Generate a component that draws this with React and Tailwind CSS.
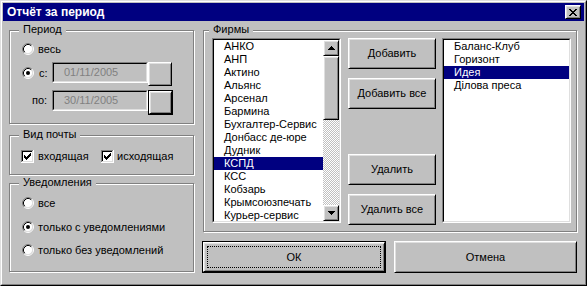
import React from "react";

const bevel =
  "border border-t-white border-l-white border-r-black border-b-black shadow-[inset_1px_1px_0_#dfdfdf,inset_-1px_-1px_0_#808080]";

const Sunken = ({ className = "", children, inner = "" }) => (
  <div className={`border border-t-[#808080] border-l-[#808080] border-r-white border-b-white ${className}`}>
    <div className={`w-full h-full border border-t-black border-l-black border-r-[#dfdfdf] border-b-[#dfdfdf] ${inner}`}>
      {children}
    </div>
  </div>
);

const Radio = ({ checked }) => (
  <svg width="12" height="12" viewBox="0 0 12 12" className="shrink-0">
    <circle cx="6" cy="6" r="4.5" fill="#fff" />
    <path d="M2.11 9.89 A5.5 5.5 0 0 1 9.89 2.11" stroke="#808080" fill="none" />
    <path d="M9.89 2.11 A5.5 5.5 0 0 1 2.11 9.89" stroke="#fff" fill="none" />
    <path d="M2.82 9.18 A4.5 4.5 0 0 1 9.18 2.82" stroke="#000" fill="none" />
    <path d="M9.18 2.82 A4.5 4.5 0 0 1 2.82 9.18" stroke="#dfdfdf" fill="none" />
    {checked && <circle cx="6" cy="6" r="2" fill="#000" />}
  </svg>
);

const Checkbox = () => (
  <svg width="13" height="13" viewBox="0 0 13 13" shapeRendering="crispEdges" className="shrink-0">
    <rect x="0" y="0" width="13" height="13" fill="#fff" />
    <rect x="0" y="0" width="12" height="1" fill="#808080" />
    <rect x="0" y="0" width="1" height="12" fill="#808080" />
    <rect x="1" y="1" width="10" height="1" fill="#000" />
    <rect x="1" y="1" width="1" height="10" fill="#000" />
    <rect x="1" y="11" width="11" height="1" fill="#dfdfdf" />
    <rect x="11" y="1" width="1" height="11" fill="#dfdfdf" />
    {[[3, 5], [4, 6], [5, 7], [6, 6], [7, 5], [8, 4], [9, 3]].map(([x, y]) => (
      <rect key={x} x={x} y={y} width="1" height="3" fill="#000" />
    ))}
  </svg>
);

const Group = ({ title, titleLeft, className = "", children }) => (
  <div className={`relative border border-[#808080] shadow-[inset_1px_1px_0_#fff,1px_1px_0_#fff] ${className}`}>
    <span className={`absolute -top-[8px] ${titleLeft} px-[4px] bg-[#c0c0c0] leading-[13px]`}>{title}</span>
    {children}
  </div>
);

const Arrow = ({ down }) => (
  <svg width="7" height="4" viewBox="0 0 7 4" shapeRendering="crispEdges">
    <path d={down ? "M0 0 H7 L3.5 4 Z" : "M0 4 H7 L3.5 0 Z"} fill="#000" />
  </svg>
);

const firms = [
  "АНКО", "АНП", "Актино", "Альянс", "Арсенал", "Бармина", "Бухгалтер-Сервис",
  "Донбасс де-юре", "Дудник", "КСПД", "КСС", "Кобзарь", "Крымсоюзпечать", "Курьер-сервис",
];
const chosen = ["Баланс-Клуб", "Горизонт", "Идея", "Ділова преса"];

const ListRow = ({ text, selected }) => (
  <div className={`h-[13px] leading-[13px] pl-[10px] whitespace-nowrap ${selected ? "bg-[#000080] text-white" : "text-black"}`}>
    {text}
  </div>
);

const Button = ({ children, className = "" }) => (
  <div className={`flex items-center justify-center bg-[#c0c0c0] ${bevel} ${className}`}>{children}</div>
);

export default function App() {
  return (
    <div className="w-[587px] h-[286px] bg-[#c0c0c0] text-[11px] text-black font-['Liberation_Sans',Arial,sans-serif] border border-t-[#dfdfdf] border-l-[#dfdfdf] border-r-black border-b-black">
      <div className="w-full h-full border border-t-white border-l-white border-r-[#808080] border-b-[#808080] p-px flex flex-col">
        {/* title bar */}
        <div className="h-[18px] bg-[#000080] flex items-center justify-between pl-[4px] pr-[3px]">
          <span className="text-white font-bold text-[12px] leading-none">Отчёт за период</span>
          <div className={`w-[16px] h-[14px] bg-[#c0c0c0] flex items-center justify-center ${bevel}`}>
            <svg width="8" height="7" viewBox="0 0 8 7" shapeRendering="crispEdges">
              <path d="M0 0 L7 7 M1 0 L8 7 M7 0 L0 7 M8 0 L1 7" stroke="#000" strokeWidth="1" />
            </svg>
          </div>
        </div>

        <div className="flex gap-[9px] pl-[6px] pt-[9px]">
          {/* left column */}
          <div className="w-[185px] flex flex-col">
            <Group title="Период" titleLeft="left-[9px]" className="h-[94px]">
              <div className="pl-[12px] pt-[12px]">
                <div className="flex items-center h-[12px]">
                  <Radio />
                  <span className="ml-[4px]">весь</span>
                </div>
                <div className="flex items-start mt-[7px]">
                  <div className="mt-[5px] flex items-center">
                    <Radio checked />
                    <span className="ml-[5px] w-[13px] leading-[12px]">с:</span>
                  </div>
                  <Sunken className="w-[96px] h-[21px]" inner="pl-[10px] flex items-center text-[#808080]">
                    01/11/2005
                  </Sunken>
                  <Button className="w-[24px] h-[24px]" />
                </div>
                <div className="flex items-start mt-[4px]">
                  <span className="w-[30px] pl-[10px] mt-[4px] leading-[13px]">по:</span>
                  <Sunken className="w-[96px] h-[21px]" inner="pl-[10px] flex items-center text-[#808080]">
                    30/11/2005
                  </Sunken>
                  <div className="border border-black">
                    <Button className="w-[23px] h-[23px]" />
                  </div>
                </div>
              </div>
            </Group>

            <Group title="Вид почты" titleLeft="left-[9px]" className="h-[40px] mt-[11px]">
              <div className="flex items-center pl-[11px] pt-[14px]">
                <div className="w-[80px] flex items-center">
                  <Checkbox />
                  <span className="ml-[4px] leading-[13px]">входящая</span>
                </div>
                <Checkbox />
                <span className="ml-[3px] leading-[13px]">исходящая</span>
              </div>
            </Group>

            <Group title="Уведомления" titleLeft="left-[9px]" className="h-[89px] mt-[8px]">
              <div className="pl-[12px] pt-[13px] flex flex-col">
                <div className="flex items-center h-[12px]">
                  <Radio />
                  <span className="ml-[4px]">все</span>
                </div>
                <div className="flex items-center h-[12px] mt-[12px]">
                  <Radio checked />
                  <span className="ml-[4px]">только с уведомлениями</span>
                </div>
                <div className="flex items-center h-[12px] mt-[11px]">
                  <Radio />
                  <span className="ml-[4px]">только без уведомлений</span>
                </div>
              </div>
            </Group>
          </div>

          {/* right column */}
          <div className="w-[374px] flex flex-col">
            <Group title="Фирмы" titleLeft="left-[5px]" className="h-[202px]">
              <div className="flex pl-[8px] pt-[7px]">
                <Sunken className="w-[129px] h-[185px] bg-white" inner="flex overflow-hidden">
                  <div className="flex-1 overflow-hidden">
                    {firms.map((f) => (
                      <ListRow key={f} text={f} selected={f === "КСПД"} />
                    ))}
                  </div>
                  <div className="w-[16px] flex flex-col">
                    <div className={`h-[16px] bg-[#c0c0c0] flex items-center justify-center ${bevel}`}>
                      <Arrow />
                    </div>
                    <div className={`h-[64px] bg-[#c0c0c0] ${bevel}`} />
                    <div className="flex-1 bg-[image:repeating-conic-gradient(#fff_0_25%,#c0c0c0_0_50%)] bg-[length:2px_2px]" />
                    <div className={`h-[16px] bg-[#c0c0c0] flex items-center justify-center ${bevel}`}>
                      <Arrow down />
                    </div>
                  </div>
                </Sunken>

                <div className="w-[88px] ml-[7px] flex flex-col">
                  <Button className="h-[31px]">Добавить</Button>
                  <Button className="h-[31px] mt-[9px]">Добавить все</Button>
                  <Button className="h-[31px] mt-[45px]">Удалить</Button>
                  <Button className="h-[31px] mt-[9px]">Удалить все</Button>
                </div>

                <Sunken className="w-[129px] h-[185px] ml-[6px] bg-white" inner="overflow-hidden">
                  {chosen.map((f) => (
                    <ListRow key={f} text={f} selected={f === "Идея"} />
                  ))}
                </Sunken>
              </div>
            </Group>

            <div className="flex mt-[9px]">
              <div className="w-[184px] h-[32px] -ml-px border border-black">
                <div className={`w-full h-full bg-[#c0c0c0] p-[3px] ${bevel}`}>
                  <div className="w-full h-full border border-dotted border-black flex items-center justify-center">
                    ОК
                  </div>
                </div>
              </div>
              <Button className="w-[183px] h-[32px] ml-[8px]">Отмена</Button>
            </div>
          </div>
        </div>
      </div>
    </div>
  );
}
